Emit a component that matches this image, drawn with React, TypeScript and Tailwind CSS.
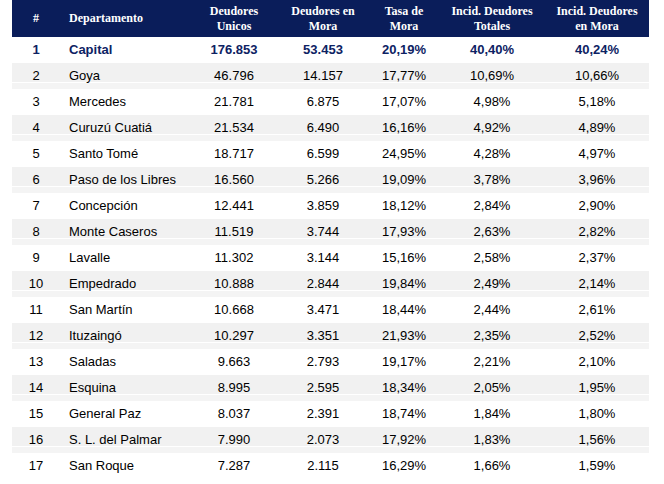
const rows: [string, string, string, string, string, string, string][] = [
  ["1", "Capital", "176.853", "53.453", "20,19%", "40,40%", "40,24%"],
  ["2", "Goya", "46.796", "14.157", "17,77%", "10,69%", "10,66%"],
  ["3", "Mercedes", "21.781", "6.875", "17,07%", "4,98%", "5,18%"],
  ["4", "Curuzú Cuatiá", "21.534", "6.490", "16,16%", "4,92%", "4,89%"],
  ["5", "Santo Tomé", "18.717", "6.599", "24,95%", "4,28%", "4,97%"],
  ["6", "Paso de los Libres", "16.560", "5.266", "19,09%", "3,78%", "3,96%"],
  ["7", "Concepción", "12.441", "3.859", "18,12%", "2,84%", "2,90%"],
  ["8", "Monte Caseros", "11.519", "3.744", "17,93%", "2,63%", "2,82%"],
  ["9", "Lavalle", "11.302", "3.144", "15,16%", "2,58%", "2,37%"],
  ["10", "Empedrado", "10.888", "2.844", "19,84%", "2,49%", "2,14%"],
  ["11", "San Martín", "10.668", "3.471", "18,44%", "2,44%", "2,61%"],
  ["12", "Ituzaingó", "10.297", "3.351", "21,93%", "2,35%", "2,52%"],
  ["13", "Saladas", "9.663", "2.793", "19,17%", "2,21%", "2,10%"],
  ["14", "Esquina", "8.995", "2.595", "18,34%", "2,05%", "1,95%"],
  ["15", "General Paz", "8.037", "2.391", "18,74%", "1,84%", "1,80%"],
  ["16", "S. L. del Palmar", "7.990", "2.073", "17,92%", "1,83%", "1,56%"],
  ["17", "San Roque", "7.287", "2.115", "16,29%", "1,66%", "1,59%"],
];

const cols = "grid grid-cols-[48px_135px_78px_100px_62px_114px_100px]";

function Row({ r, i }: { r: (typeof rows)[number]; i: number }) {
  const first = i === 0;
  const gray = i % 2 === 1;
  return (
    <div
      className={`${cols} h-[26px] items-center text-[13px] ${
        first ? "font-bold text-[#0d2263]" : "text-black"
      } ${
        gray
          ? "bg-[linear-gradient(to_bottom,#f1f1f1_19px,#ffffff_19px,#ffffff_20px,#f4f4f4_20px)]"
          : "bg-white"
      }`}
    >
      <div className="text-center">{r[0]}</div>
      <div className="pl-[9px]">{r[1]}</div>
      <div className="text-center">{r[2]}</div>
      <div className="text-center">{r[3]}</div>
      <div className="text-center">{r[4]}</div>
      <div className="text-center">{r[5]}</div>
      <div className="pr-[4px] text-center">{r[6]}</div>
    </div>
  );
}

export default function App() {
  return (
    <div className="h-[484px] w-[664px] bg-white pl-[12px] font-['Liberation_Sans',Arial,sans-serif]">
      <div className="w-[637px]">
        <div
          className={`${cols} h-[37px] items-center bg-[#0a1d5a] font-['Liberation_Serif','Times_New_Roman',serif] text-[12px] font-bold leading-[15px] text-white`}
        >
          <div className="text-center">#</div>
          <div className="pl-[9px]">Departamento</div>
          <div className="text-center">
            Deudores
            <br />
            Unicos
          </div>
          <div className="text-center">
            Deudores en
            <br />
            Mora
          </div>
          <div className="text-center">
            Tasa de
            <br />
            Mora
          </div>
          <div className="text-center">
            Incid. Deudores
            <br />
            Totales
          </div>
          <div className="pr-[4px] text-center">
            Incid. Deudores
            <br />
            en Mora
          </div>
        </div>
        {rows.map((r, i) => (
          <Row key={r[0]} r={r} i={i} />
        ))}
      </div>
    </div>
  );
}
